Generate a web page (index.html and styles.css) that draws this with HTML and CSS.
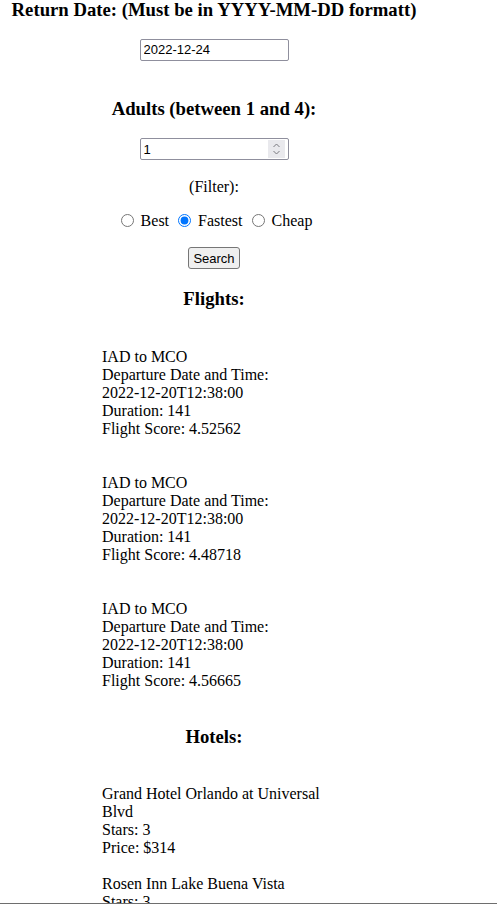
FILE: index.html
```html
<!DOCTYPE html>
<html>
<head>
<meta charset="utf-8">
<link rel="stylesheet" href="styles.css">
</head>
<body>
<main class="page">
  <h3 class="heading heading-first">Return Date: (Must be in YYYY-MM-DD formatt)</h3>
  <input class="field" type="text" value="2022-12-24">
  <h3 class="heading heading-adults">Adults (between 1 and 4):</h3>
  <div class="number-wrap">
    <input class="field field-number" type="text" value="1">
    <span class="spinner">
      <svg width="17" height="18" viewBox="0 0 17 18">
        <path d="M5.5 7 L8.5 4 L11.5 7" fill="none" stroke="#7a7a80" stroke-width="1"/>
        <path d="M5.5 11 L8.5 14 L11.5 11" fill="none" stroke="#7a7a80" stroke-width="1"/>
      </svg>
    </span>
  </div>
  <p class="filter-label">(Filter):</p>
  <div class="radios">
    <label class="radio-item"><input type="radio" name="filter"> Best</label>
    <label class="radio-item"><input type="radio" name="filter" checked> Fastest</label>
    <label class="radio-item"><input type="radio" name="filter"> Cheap</label>
  </div>
  <button class="search-btn">Search</button>
  <h3 class="heading heading-section">Flights:</h3>
  <div class="results results-flights">
    <div class="entry">IAD to MCO<br>Departure Date and Time: <span class="nowrap">2022-12-20T12:38:00</span><br>Duration: 141<br>Flight Score: 4.52562</div>
    <div class="entry">IAD to MCO<br>Departure Date and Time: <span class="nowrap">2022-12-20T12:38:00</span><br>Duration: 141<br>Flight Score: 4.48718</div>
    <div class="entry">IAD to MCO<br>Departure Date and Time: <span class="nowrap">2022-12-20T12:38:00</span><br>Duration: 141<br>Flight Score: 4.56665</div>
  </div>
  <h3 class="heading heading-section">Hotels:</h3>
  <div class="results results-hotels">
    <div class="entry">Grand Hotel Orlando at Universal Blvd<br>Stars: 3<br>Price: $314</div>
    <div class="entry">Rosen Inn Lake Buena Vista<br>Stars: 3<br>Price: $289</div>
  </div>
</main>
<div class="bottom-edge"></div>
</body>
</html>
```
FILE: styles.css
```css
html, body {
  margin: 0;
  padding: 0;
  background: #fff;
}
body {
  font-family: "Liberation Serif", "Times New Roman", serif;
  font-size: 16px;
  line-height: 18px;
  color: #000;
  overflow: hidden;
}
.page {
  width: 428px;
  padding-top: 1px;
  text-align: center;
}
.heading {
  font-size: 18.72px;
  font-weight: bold;
  line-height: 22px;
  margin: 18.72px 0;
}
.heading-first {
  margin-top: 0;
  margin-bottom: 19.72px;
  line-height: 18px;
}
.heading-adults {
  margin-top: 37px;
}
.field {
  display: block;
  box-sizing: border-box;
  width: 149px;
  height: 22px;
  margin: 0 auto;
  padding: 1px 3px;
  border: 1px solid #8f8f9d;
  border-radius: 2px;
  font-family: "Liberation Sans", Arial, sans-serif;
  font-size: 13px;
  color: #000;
  background: #fff;
}
.number-wrap {
  position: relative;
  width: 149px;
  margin: 0 auto;
}
.spinner {
  position: absolute;
  right: 4px;
  top: 2px;
  width: 17px;
  height: 18px;
  background: #e9e9ed;
  display: flex;
}
.filter-label {
  margin: 18px 0 15px;
}
.radios {
  margin: 0 0 17px;
}
.radio-item input {
  margin: 3px 3px 0 5px;
  width: 13px;
  height: 13px;
  vertical-align: -1px;
  accent-color: #0075ff;
}
.search-btn {
  display: block;
  margin: 0 auto;
  height: 22px;
  padding: 0 4px;
  font-family: "Liberation Sans", Arial, sans-serif;
  font-size: 13px;
  color: #000;
  background: #efefef;
  border: 1px solid #767676;
  border-radius: 3px;
}
.heading-section {
  margin-top: 18.5px;
}
.nowrap {
  white-space: nowrap;
}
.results {
  width: 224px;
  margin: 0 auto;
  text-align: left;
  display: flex;
  flex-direction: column;
}
.results-flights {
  gap: 36px;
  padding: 19px 0 18px;
}
.results-hotels {
  gap: 18px;
  padding: 18px 0 18px;
}
.results-flights + .heading-section {
  margin-top: 18.72px;
}
.bottom-edge {
  position: fixed;
  left: 0;
  right: 0;
  bottom: 0;
  height: 1px;
  background: #6e6e6e;
}
```
